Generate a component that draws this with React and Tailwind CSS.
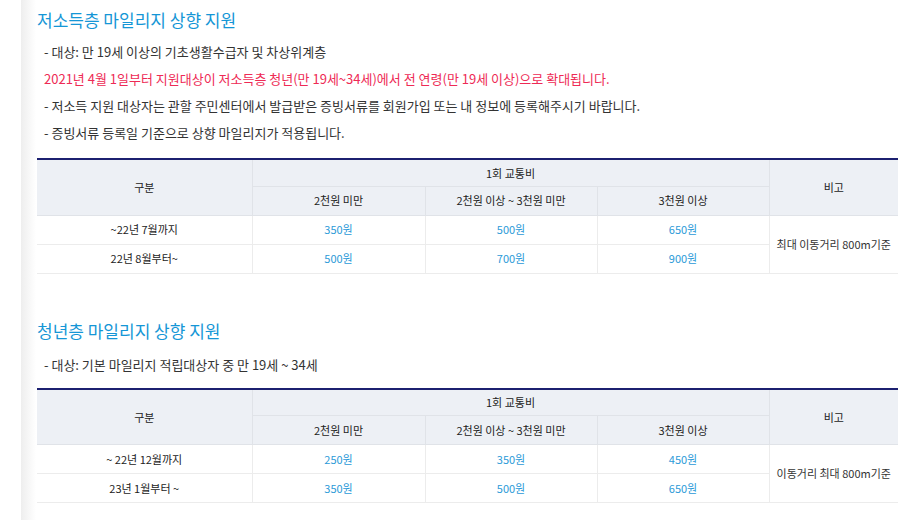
import React from 'react';

const sections = [
    {
        title: '저소득층 마일리지 상향 지원',
        notes: [
            { text: '- 대상: 만 19세 이상의 기초생활수급자 및 차상위계층' },
            { text: '2021년 4월 1일부터 지원대상이 저소득층 청년(만 19세~34세)에서 전 연령(만 19세 이상)으로 확대됩니다.', red: true },
            { text: '- 저소득 지원 대상자는 관할 주민센터에서 발급받은 증빙서류를 회원가입 또는 내 정보에 등록해주시기 바랍니다.' },
            { text: '- 증빙서류 등록일 기준으로 상향 마일리지가 적용됩니다.' },
        ],
        rows: [
            ['~22년 7월까지', '350원', '500원', '650원'],
            ['22년 8월부터~', '500원', '700원', '900원'],
        ],
        remark: '최대 이동거리 800m기준',
    },
    {
        title: '청년층 마일리지 상향 지원',
        notes: [{ text: '- 대상: 기본 마일리지 적립대상자 중 만 19세 ~ 34세' }],
        rows: [
            ['~ 22년 12월까지', '250원', '350원', '450원'],
            ['23년 1월부터 ~', '350원', '500원', '650원'],
        ],
        remark: '이동거리 최대 800m기준',
    },
];

function RateTable({ rows, remark }) {
    return (
        <table className="w-[861px] table-fixed border-collapse border-t-2 border-[#1c2070] text-[11px] text-[#222]">
            <colgroup>
                <col className="w-[215px]" />
                <col className="w-[173px]" />
                <col className="w-[172px]" />
                <col className="w-[172px]" />
                <col className="w-[129px]" />
            </colgroup>
            <thead className="bg-[#edf0f5]">
                <tr className="h-[27px]">
                    <th rowSpan={2} className="font-normal border-r border-b border-[#e0e3e8]">구분</th>
                    <th colSpan={3} className="font-normal border-r border-b border-[#e0e3e8]">1회 교통비</th>
                    <th rowSpan={2} className="font-normal border-b border-[#e0e3e8]">비고</th>
                </tr>
                <tr className="h-[29px]">
                    <th className="font-normal border-r border-b border-[#e0e3e8]">2천원 미만</th>
                    <th className="font-normal border-r border-b border-[#e0e3e8]">2천원 이상 ~ 3천원 미만</th>
                    <th className="font-normal border-r border-b border-[#e0e3e8]">3천원 이상</th>
                </tr>
            </thead>
            <tbody>
                {rows.map((row, i) => (
                    <tr key={i} className="h-[29px]">
                        <td className="text-center border-r border-b border-[#ececec]">{row[0]}</td>
                        <td className="text-center border-r border-b border-[#ececec] text-[#2b9ad8]">{row[1]}</td>
                        <td className="text-center border-r border-b border-[#ececec] text-[#2b9ad8]">{row[2]}</td>
                        <td className="text-center border-r border-b border-[#ececec] text-[#2b9ad8]">{row[3]}</td>
                        {i === 0 && (
                            <td rowSpan={rows.length} className="text-center border-b border-[#ececec] text-[#333]">{remark}</td>
                        )}
                    </tr>
                ))}
            </tbody>
        </table>
    );
}

export default function App() {
    return (
        <div className="w-[924px] h-[520px] overflow-hidden bg-white pl-[21px] font-['Noto_Sans_CJK_KR',sans-serif]">
            <div className="h-full bg-[linear-gradient(to_right,#eeeeee,#ffffff_15px)] pl-4 pt-2">
                {sections.map((s, idx) => (
                    <section key={idx} className={idx > 0 ? 'mt-[45px]' : ''}>
                        <h2 className="text-[17px] leading-6 text-[#1596d6]">{s.title}</h2>
                        <div className={`${idx > 0 ? 'mt-[8px]' : 'mt-[6px]'} pl-[7px] text-[13px] leading-[27px] text-[#333]`}>
                            {s.notes.map((n, j) => (
                                <p key={j} className={n.red ? 'text-[#ee2a55]' : ''}>{n.text}</p>
                            ))}
                        </div>
                        <div className={idx > 0 ? 'mt-[10px]' : 'mt-[12px]'}>
                            <RateTable rows={s.rows} remark={s.remark} />
                        </div>
                    </section>
                ))}
            </div>
        </div>
    );
}
